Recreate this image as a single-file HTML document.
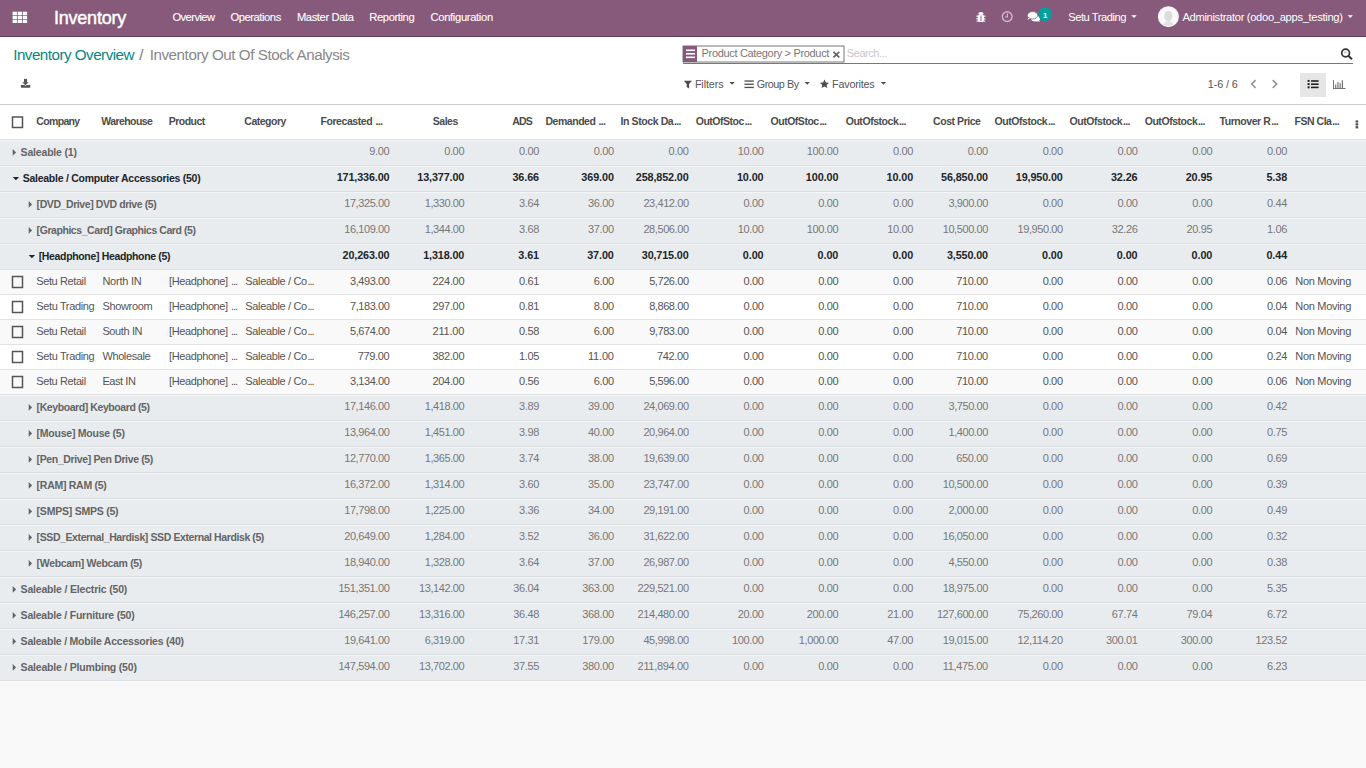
<!DOCTYPE html>
<html><head><meta charset="utf-8"><title>Inventory Out Of Stock Analysis</title>
<style>
html,body{margin:0;padding:0;width:1366px;height:768px;overflow:hidden;background:#f9f9f9}
svg{position:absolute;left:0;top:0;display:block}
text{font-family:"Liberation Sans",sans-serif;white-space:pre}
</style></head><body>
<svg width="1366" height="768" viewBox="0 0 1366 768">
<rect x="0" y="0" width="1366" height="36" fill="#875a7b" />
<rect x="0" y="36" width="1366" height="1" fill="#5f3f57" />
<rect x="12.6" y="11.7" width="4.3" height="3.3" fill="#ffffff" />
<rect x="12.6" y="15.7" width="4.3" height="3.3" fill="#ffffff" />
<rect x="12.6" y="19.7" width="4.3" height="3.3" fill="#ffffff" />
<rect x="17.7" y="11.7" width="4.3" height="3.3" fill="#ffffff" />
<rect x="17.7" y="15.7" width="4.3" height="3.3" fill="#ffffff" />
<rect x="17.7" y="19.7" width="4.3" height="3.3" fill="#ffffff" />
<rect x="22.799999999999997" y="11.7" width="4.3" height="3.3" fill="#ffffff" />
<rect x="22.799999999999997" y="15.7" width="4.3" height="3.3" fill="#ffffff" />
<rect x="22.799999999999997" y="19.7" width="4.3" height="3.3" fill="#ffffff" />
<rect x="0" y="37" width="1366" height="67" fill="#ffffff" />
<rect x="0" y="104" width="1366" height="1" fill="#cdcdcd" />
<rect x="683" y="46" width="161" height="16" fill="#ffffff" stroke="#777" stroke-width="1"/>
<rect x="683" y="46" width="14" height="16" fill="#875a7b" />
<rect x="686" y="49.5" width="9" height="1.6" fill="#ffffff" />
<rect x="686" y="53.0" width="9" height="1.6" fill="#ffffff" />
<rect x="686" y="56.5" width="9" height="1.6" fill="#ffffff" />
<rect x="683" y="63" width="670" height="1" fill="#777777" />
<rect x="1300" y="73" width="26" height="24" fill="#e6e6e6" />
<rect x="0" y="105" width="1366" height="34" fill="#ffffff" />
<rect x="0" y="139" width="1366" height="1" fill="#dfe0e3" />
<rect x="0" y="140" width="1366" height="25" fill="#e9ecef" />
<rect x="0" y="140" width="1366" height="1" fill="#f4f5f7" />
<rect x="0" y="165" width="1366" height="1" fill="#dcdfe2" />
<rect x="0" y="166" width="1366" height="25" fill="#e9ecef" />
<rect x="0" y="166" width="1366" height="1" fill="#f4f5f7" />
<rect x="0" y="191" width="1366" height="1" fill="#dcdfe2" />
<rect x="0" y="192" width="1366" height="25" fill="#e9ecef" />
<rect x="0" y="192" width="1366" height="1" fill="#f4f5f7" />
<rect x="0" y="217" width="1366" height="1" fill="#dcdfe2" />
<rect x="0" y="218" width="1366" height="25" fill="#e9ecef" />
<rect x="0" y="218" width="1366" height="1" fill="#f4f5f7" />
<rect x="0" y="243" width="1366" height="1" fill="#dcdfe2" />
<rect x="0" y="244" width="1366" height="25" fill="#e9ecef" />
<rect x="0" y="244" width="1366" height="1" fill="#f4f5f7" />
<rect x="0" y="269" width="1366" height="1" fill="#dcdfe2" />
<rect x="0" y="270" width="1366" height="24" fill="#f9f9f9" />
<rect x="0" y="294" width="1366" height="1" fill="#e2e2e2" />
<rect x="12.5" y="276.5" width="10" height="11" fill="none" stroke="#555" stroke-width="1.5"/>
<rect x="0" y="295" width="1366" height="24" fill="#ffffff" />
<rect x="0" y="319" width="1366" height="1" fill="#e2e2e2" />
<rect x="12.5" y="301.5" width="10" height="11" fill="none" stroke="#555" stroke-width="1.5"/>
<rect x="0" y="320" width="1366" height="24" fill="#f9f9f9" />
<rect x="0" y="344" width="1366" height="1" fill="#e2e2e2" />
<rect x="12.5" y="326.5" width="10" height="11" fill="none" stroke="#555" stroke-width="1.5"/>
<rect x="0" y="345" width="1366" height="24" fill="#ffffff" />
<rect x="0" y="369" width="1366" height="1" fill="#e2e2e2" />
<rect x="12.5" y="351.5" width="10" height="11" fill="none" stroke="#555" stroke-width="1.5"/>
<rect x="0" y="370" width="1366" height="24" fill="#f9f9f9" />
<rect x="0" y="394" width="1366" height="1" fill="#e2e2e2" />
<rect x="12.5" y="376.5" width="10" height="11" fill="none" stroke="#555" stroke-width="1.5"/>
<rect x="0" y="395" width="1366" height="25" fill="#e9ecef" />
<rect x="0" y="395" width="1366" height="1" fill="#f4f5f7" />
<rect x="0" y="420" width="1366" height="1" fill="#dcdfe2" />
<rect x="0" y="421" width="1366" height="25" fill="#e9ecef" />
<rect x="0" y="421" width="1366" height="1" fill="#f4f5f7" />
<rect x="0" y="446" width="1366" height="1" fill="#dcdfe2" />
<rect x="0" y="447" width="1366" height="25" fill="#e9ecef" />
<rect x="0" y="447" width="1366" height="1" fill="#f4f5f7" />
<rect x="0" y="472" width="1366" height="1" fill="#dcdfe2" />
<rect x="0" y="473" width="1366" height="25" fill="#e9ecef" />
<rect x="0" y="473" width="1366" height="1" fill="#f4f5f7" />
<rect x="0" y="498" width="1366" height="1" fill="#dcdfe2" />
<rect x="0" y="499" width="1366" height="25" fill="#e9ecef" />
<rect x="0" y="499" width="1366" height="1" fill="#f4f5f7" />
<rect x="0" y="524" width="1366" height="1" fill="#dcdfe2" />
<rect x="0" y="525" width="1366" height="25" fill="#e9ecef" />
<rect x="0" y="525" width="1366" height="1" fill="#f4f5f7" />
<rect x="0" y="550" width="1366" height="1" fill="#dcdfe2" />
<rect x="0" y="551" width="1366" height="25" fill="#e9ecef" />
<rect x="0" y="551" width="1366" height="1" fill="#f4f5f7" />
<rect x="0" y="576" width="1366" height="1" fill="#dcdfe2" />
<rect x="0" y="577" width="1366" height="25" fill="#e9ecef" />
<rect x="0" y="577" width="1366" height="1" fill="#f4f5f7" />
<rect x="0" y="602" width="1366" height="1" fill="#dcdfe2" />
<rect x="0" y="603" width="1366" height="25" fill="#e9ecef" />
<rect x="0" y="603" width="1366" height="1" fill="#f4f5f7" />
<rect x="0" y="628" width="1366" height="1" fill="#dcdfe2" />
<rect x="0" y="629" width="1366" height="25" fill="#e9ecef" />
<rect x="0" y="629" width="1366" height="1" fill="#f4f5f7" />
<rect x="0" y="654" width="1366" height="1" fill="#dcdfe2" />
<rect x="0" y="655" width="1366" height="25" fill="#e9ecef" />
<rect x="0" y="655" width="1366" height="1" fill="#f4f5f7" />
<rect x="0" y="680" width="1366" height="1" fill="#dcdfe2" />
<rect x="0" y="681" width="1366" height="87" fill="#f9f9f9" />
<rect x="0" y="685" width="1366" height="1" fill="#f4f4f4" />
<rect x="12.5" y="117" width="10" height="10.5" fill="none" stroke="#555" stroke-width="1.5"/>
<g fill="#ffffff"><ellipse cx="980.9" cy="13.4" rx="2.6" ry="1.5"/><rect x="977.8" y="14.6" width="6.2" height="7.2" rx="2.2"/><rect x="976.3" y="15.6" width="9.2" height="1.1"/><rect x="976.3" y="18.3" width="9.2" height="1.1"/><rect x="976.6" y="20.6" width="8.6" height="1.1"/></g><rect x="980.5" y="15.5" width="0.9" height="5.5" fill="#875a7b"/>
<circle cx="1007.2" cy="16.6" r="4.9" fill="none" stroke="#d3b6cb" stroke-width="1.4"/><path d="M1007.4 13.6 v3.3 h-2.2" fill="none" stroke="#d3b6cb" stroke-width="1.2"/>
<g fill="#ffffff"><ellipse cx="1032.6" cy="15.3" rx="5.2" ry="3.7"/><path d="M1028.4 17.2 l-1 2.6 l3.6 -1.4 z"/><ellipse cx="1035.6" cy="18.4" rx="4.6" ry="3.0"/><path d="M1038.4 19.6 l1.6 2.2 l-3.8 -0.9 z"/></g><ellipse cx="1032.6" cy="15.3" rx="5.2" ry="3.7" fill="none" stroke="#875a7b" stroke-width="0.8"/>
<circle cx="1045.1" cy="14.1" r="6.9" fill="#00a09d"/>
<path d="M1131.3 15.2 h5.4 l-2.7 2.8 z" fill="#ffffff"/>
<path d="M1347.7 15.2 h5.2 l-2.6 2.7 z" fill="#ffffff"/>
<circle cx="1168.4" cy="16.7" r="10.5" fill="#f9f9f9"/><ellipse cx="1168.3" cy="16" rx="4" ry="5.2" fill="#dcdcdc"/><path d="M1163.2 24.8 q1 -3.4 5.2 -3.6 q4.2 0.2 5.2 3.6 q-2.4 1 -5.2 1 q-2.8 0 -5.2 -1z" fill="#e2e2e2"/>
<g fill="#555555"><rect x="24" y="78.9" width="3" height="3.8"/><path d="M22.1 82.2 h6.7 l-3.35 3.1 z"/><path d="M20.9 85.1 h3.6 l1 1 l1 -1 h3.7 v2.7 h-9.3 z"/></g>
<path d="M683.8 80.7 h8.2 l-2.9 3.4 v4.5 l-2.4 -1.6 v-2.9 z" fill="#4c4c4c"/>
<path d="M729.4 82 h5.4 l-2.7 2.8 z" fill="#4c4c4c"/>
<g fill="#4c4c4c"><rect x="744.5" y="80.4" width="9.3" height="1.3"/><rect x="744.5" y="83.6" width="9.3" height="1.3"/><rect x="744.5" y="86.8" width="9.3" height="1.3"/></g>
<path d="M804.6 82 h5.2 l-2.6 2.8 z" fill="#4c4c4c"/>
<path d="M824.45 79.6 l1.35 2.9 l3.2 0.35 l-2.4 2.15 l0.7 3.1 l-2.85 -1.65 l-2.85 1.65 l0.7 -3.1 l-2.4 -2.15 l3.2 -0.35 z" fill="#4c4c4c"/>
<path d="M880.9 82 h5.2 l-2.6 2.8 z" fill="#4c4c4c"/>
<path d="M833.4 51.8 l5.9 5.6 M839.3 51.8 l-5.9 5.6" stroke="#666" stroke-width="1.7"/>
<circle cx="1345.6" cy="53" r="3.9" fill="none" stroke="#333" stroke-width="1.7"/><path d="M1348.3 55.8 l3.7 3.5" stroke="#333" stroke-width="2"/><path d="M1343.8 52.2 h3" stroke="#999" stroke-width="0.8"/>
<path d="M1255.6 80.2 l-4 3.85 l4 3.85" fill="none" stroke="#999" stroke-width="1.7"/>
<path d="M1272.7 80.2 l4 3.85 l-4 3.85" fill="none" stroke="#999" stroke-width="1.7"/>
<g fill="#222"><rect x="1307.6" y="79.9" width="2" height="2"/><rect x="1307.6" y="83.1" width="2" height="2"/><rect x="1307.6" y="86.3" width="2" height="2"/><rect x="1311" y="80.2" width="7.6" height="1.6"/><rect x="1311" y="83.4" width="7.6" height="1.6"/><rect x="1311" y="86.6" width="7.6" height="1.6"/></g>
<g fill="#666"><rect x="1333" y="80" width="0.9" height="8.8"/><rect x="1333" y="88" width="12.5" height="0.9"/><rect x="1335.2" y="84.5" width="1.1" height="3.5"/><rect x="1337.4" y="82" width="1.1" height="6"/><rect x="1339.6" y="83.3" width="1.1" height="4.7"/><rect x="1341.8" y="80.3" width="1.1" height="7.7"/></g>
<g fill="#4c4c4c"><rect x="1355.6" y="120.4" width="2.6" height="2.2"/><rect x="1355.6" y="123.3" width="2.6" height="2.2"/><rect x="1355.6" y="126.2" width="2.6" height="2.2"/></g>
<path d="M12.7 149.0 v6.8 l3.4 -3.4 z" fill="#646464"/>
<path d="M12.7 177 h6.4 l-3.2 3.2 z" fill="#212529"/>
<path d="M28.7 201.0 v6.8 l3.4 -3.4 z" fill="#646464"/>
<path d="M28.7 227.0 v6.8 l3.4 -3.4 z" fill="#646464"/>
<path d="M28.7 255 h6.4 l-3.2 3.2 z" fill="#212529"/>
<path d="M28.7 404.0 v6.8 l3.4 -3.4 z" fill="#646464"/>
<path d="M28.7 430.0 v6.8 l3.4 -3.4 z" fill="#646464"/>
<path d="M28.7 456.0 v6.8 l3.4 -3.4 z" fill="#646464"/>
<path d="M28.7 482.0 v6.8 l3.4 -3.4 z" fill="#646464"/>
<path d="M28.7 508.0 v6.8 l3.4 -3.4 z" fill="#646464"/>
<path d="M28.7 534.0 v6.8 l3.4 -3.4 z" fill="#646464"/>
<path d="M28.7 560.0 v6.8 l3.4 -3.4 z" fill="#646464"/>
<path d="M12.7 586.0 v6.8 l3.4 -3.4 z" fill="#646464"/>
<path d="M12.7 612.0 v6.8 l3.4 -3.4 z" fill="#646464"/>
<path d="M12.7 638.0 v6.8 l3.4 -3.4 z" fill="#646464"/>
<path d="M12.7 664.0 v6.8 l3.4 -3.4 z" fill="#646464"/>
<text x="54.0" y="24.0" font-size="18" font-weight="400" fill="#ffffff" letter-spacing="-0.225" stroke="#ffffff" stroke-width="0.45">Inventory</text>
<text x="172.4" y="21.1" font-size="11.2" font-weight="400" fill="#ffffff" letter-spacing="-0.564" stroke="#ffffff" stroke-width="0.1">Overview</text>
<text x="230.4" y="21.1" font-size="11.2" font-weight="400" fill="#ffffff" letter-spacing="-0.431" stroke="#ffffff" stroke-width="0.1">Operations</text>
<text x="296.9" y="21.1" font-size="11.2" font-weight="400" fill="#ffffff" letter-spacing="-0.392" stroke="#ffffff" stroke-width="0.1">Master Data</text>
<text x="369.3" y="21.1" font-size="11.2" font-weight="400" fill="#ffffff" letter-spacing="-0.396" stroke="#ffffff" stroke-width="0.1">Reporting</text>
<text x="430.5" y="21.1" font-size="11.2" font-weight="400" fill="#ffffff" letter-spacing="-0.326" stroke="#ffffff" stroke-width="0.1">Configuration</text>
<text x="1068.2" y="21.4" font-size="11.2" font-weight="400" fill="#ffffff" letter-spacing="-0.459">Setu Trading</text>
<text x="1182.4" y="21.3" font-size="11.2" font-weight="400" fill="#ffffff" letter-spacing="-0.327">Administrator (odoo_apps_testing)</text>
<text x="13.2" y="60.2" font-size="15.2" font-weight="400" fill="#06877f" letter-spacing="-0.510">Inventory Overview</text>
<text x="139.2" y="60.2" font-size="15.2" font-weight="400" fill="#777777" letter-spacing="1.718">/</text>
<text x="149.7" y="60.2" font-size="15.2" font-weight="400" fill="#888888" letter-spacing="-0.445">Inventory Out Of Stock Analysis</text>
<text x="701.6" y="56.9" font-size="11" font-weight="400" fill="#777777" letter-spacing="-0.331">Product Category &gt; Product</text>
<text x="846.8" y="57.0" font-size="11" font-weight="400" fill="#c8c8c8" letter-spacing="-0.432">Search...</text>
<text x="694.9" y="88.0" font-size="10.8" font-weight="400" fill="#555555" letter-spacing="-0.114">Filters</text>
<text x="756.7" y="88.0" font-size="10.8" font-weight="400" fill="#555555" letter-spacing="-0.457">Group By</text>
<text x="832.1" y="88.0" font-size="10.8" font-weight="400" fill="#555555" letter-spacing="-0.228">Favorites</text>
<text x="1207.8" y="87.9" font-size="10.8" font-weight="400" fill="#555555" letter-spacing="-0.111">1-6 / 6</text>
<text x="1045.3" y="17.6" font-size="8" font-weight="700" fill="#ffffff" letter-spacing="0.141" text-anchor="middle">1</text>
<text x="36.3" y="125.1" font-size="10.5" font-weight="700" fill="#4c4c4c" letter-spacing="-0.657">Company</text>
<text x="101.2" y="125.1" font-size="10.5" font-weight="700" fill="#4c4c4c" letter-spacing="-0.555">Warehouse</text>
<text x="168.7" y="125.1" font-size="10.5" font-weight="700" fill="#4c4c4c" letter-spacing="-0.513">Product</text>
<text x="244.3" y="125.1" font-size="10.5" font-weight="700" fill="#4c4c4c" letter-spacing="-0.493">Category</text>
<text x="320.4" y="125.1" font-size="10.5" font-weight="700" fill="#4c4c4c" letter-spacing="-0.415">Forecasted </text>
<text x="375.5" y="125.1" font-size="10.5" font-weight="700" fill="#4c4c4c" letter-spacing="-0.666">...</text>
<text x="545.5" y="125.1" font-size="10.5" font-weight="700" fill="#4c4c4c" letter-spacing="-0.468">Demanded </text>
<text x="598.6" y="125.1" font-size="10.5" font-weight="700" fill="#4c4c4c" letter-spacing="-0.666">...</text>
<text x="620.6" y="125.1" font-size="10.5" font-weight="700" fill="#4c4c4c" letter-spacing="-0.409">In Stock Da</text>
<text x="674.0" y="125.1" font-size="10.5" font-weight="700" fill="#4c4c4c" letter-spacing="-0.666">...</text>
<text x="695.7" y="125.1" font-size="10.5" font-weight="700" fill="#4c4c4c" letter-spacing="-0.478">OutOfStoc</text>
<text x="744.7" y="125.1" font-size="10.5" font-weight="700" fill="#4c4c4c" letter-spacing="-0.666">...</text>
<text x="770.5" y="125.1" font-size="10.5" font-weight="700" fill="#4c4c4c" letter-spacing="-0.478">OutOfStoc</text>
<text x="819.5" y="125.1" font-size="10.5" font-weight="700" fill="#4c4c4c" letter-spacing="-0.666">...</text>
<text x="845.7" y="125.1" font-size="10.5" font-weight="700" fill="#4c4c4c" letter-spacing="-0.451">OutOfstock</text>
<text x="899.1" y="125.1" font-size="10.5" font-weight="700" fill="#4c4c4c" letter-spacing="-0.666">...</text>
<text x="994.6" y="125.1" font-size="10.5" font-weight="700" fill="#4c4c4c" letter-spacing="-0.451">OutOfstock</text>
<text x="1048.0" y="125.1" font-size="10.5" font-weight="700" fill="#4c4c4c" letter-spacing="-0.666">...</text>
<text x="1069.6" y="125.1" font-size="10.5" font-weight="700" fill="#4c4c4c" letter-spacing="-0.451">OutOfstock</text>
<text x="1123.0" y="125.1" font-size="10.5" font-weight="700" fill="#4c4c4c" letter-spacing="-0.666">...</text>
<text x="1144.7" y="125.1" font-size="10.5" font-weight="700" fill="#4c4c4c" letter-spacing="-0.451">OutOfstock</text>
<text x="1198.1" y="125.1" font-size="10.5" font-weight="700" fill="#4c4c4c" letter-spacing="-0.666">...</text>
<text x="1219.5" y="125.1" font-size="10.5" font-weight="700" fill="#4c4c4c" letter-spacing="-0.434">Turnover R</text>
<text x="1271.2" y="125.1" font-size="10.5" font-weight="700" fill="#4c4c4c" letter-spacing="-0.666">...</text>
<text x="1294.5" y="125.1" font-size="10.5" font-weight="700" fill="#4c4c4c" letter-spacing="-0.474">FSN Cla</text>
<text x="1332.2" y="125.1" font-size="10.5" font-weight="700" fill="#4c4c4c" letter-spacing="-0.666">...</text>
<text x="457.9" y="125.1" font-size="10.5" font-weight="700" fill="#4c4c4c" letter-spacing="-0.459" text-anchor="end">Sales</text>
<text x="532.0" y="125.1" font-size="10.5" font-weight="700" fill="#4c4c4c" letter-spacing="-0.813" text-anchor="end">ADS</text>
<text x="980.5" y="125.1" font-size="10.5" font-weight="700" fill="#4c4c4c" letter-spacing="-0.453" text-anchor="end">Cost Price</text>
<text x="20.6" y="156.2" font-size="10.5" font-weight="700" fill="#646464" letter-spacing="-0.181">Saleable (1)</text>
<text x="389.4" y="155.3" font-size="11" font-weight="400" fill="#777777" letter-spacing="-0.338" text-anchor="end">9.00</text>
<text x="464.2" y="155.3" font-size="11" font-weight="400" fill="#777777" letter-spacing="-0.338" text-anchor="end">0.00</text>
<text x="539.0" y="155.3" font-size="11" font-weight="400" fill="#777777" letter-spacing="-0.338" text-anchor="end">0.00</text>
<text x="613.8" y="155.3" font-size="11" font-weight="400" fill="#777777" letter-spacing="-0.338" text-anchor="end">0.00</text>
<text x="688.6" y="155.3" font-size="11" font-weight="400" fill="#777777" letter-spacing="-0.338" text-anchor="end">0.00</text>
<text x="763.5" y="155.3" font-size="11" font-weight="400" fill="#777777" letter-spacing="-0.338" text-anchor="end">10.00</text>
<text x="838.3" y="155.3" font-size="11" font-weight="400" fill="#777777" letter-spacing="-0.338" text-anchor="end">100.00</text>
<text x="913.1" y="155.3" font-size="11" font-weight="400" fill="#777777" letter-spacing="-0.338" text-anchor="end">0.00</text>
<text x="987.9" y="155.3" font-size="11" font-weight="400" fill="#777777" letter-spacing="-0.338" text-anchor="end">0.00</text>
<text x="1062.7" y="155.3" font-size="11" font-weight="400" fill="#777777" letter-spacing="-0.338" text-anchor="end">0.00</text>
<text x="1137.5" y="155.3" font-size="11" font-weight="400" fill="#777777" letter-spacing="-0.338" text-anchor="end">0.00</text>
<text x="1212.3" y="155.3" font-size="11" font-weight="400" fill="#777777" letter-spacing="-0.338" text-anchor="end">0.00</text>
<text x="1287.1" y="155.3" font-size="11" font-weight="400" fill="#777777" letter-spacing="-0.338" text-anchor="end">0.00</text>
<text x="22.7" y="182.2" font-size="10.5" font-weight="700" fill="#212529" letter-spacing="-0.257">Saleable / Computer Accessories (50)</text>
<text x="389.4" y="181.3" font-size="10.8" font-weight="700" fill="#212529" letter-spacing="-0.131" text-anchor="end">171,336.00</text>
<text x="464.2" y="181.3" font-size="10.8" font-weight="700" fill="#212529" letter-spacing="-0.134" text-anchor="end">13,377.00</text>
<text x="539.0" y="181.3" font-size="10.8" font-weight="700" fill="#212529" letter-spacing="-0.086" text-anchor="end">36.66</text>
<text x="613.8" y="181.3" font-size="10.8" font-weight="700" fill="#212529" letter-spacing="-0.088" text-anchor="end">369.00</text>
<text x="688.6" y="181.3" font-size="10.8" font-weight="700" fill="#212529" letter-spacing="-0.131" text-anchor="end">258,852.00</text>
<text x="763.5" y="181.3" font-size="10.8" font-weight="700" fill="#212529" letter-spacing="-0.086" text-anchor="end">10.00</text>
<text x="838.3" y="181.3" font-size="10.8" font-weight="700" fill="#212529" letter-spacing="-0.088" text-anchor="end">100.00</text>
<text x="913.1" y="181.3" font-size="10.8" font-weight="700" fill="#212529" letter-spacing="-0.086" text-anchor="end">10.00</text>
<text x="987.9" y="181.3" font-size="10.8" font-weight="700" fill="#212529" letter-spacing="-0.134" text-anchor="end">56,850.00</text>
<text x="1062.7" y="181.3" font-size="10.8" font-weight="700" fill="#212529" letter-spacing="-0.134" text-anchor="end">19,950.00</text>
<text x="1137.5" y="181.3" font-size="10.8" font-weight="700" fill="#212529" letter-spacing="-0.086" text-anchor="end">32.26</text>
<text x="1212.3" y="181.3" font-size="10.8" font-weight="700" fill="#212529" letter-spacing="-0.086" text-anchor="end">20.95</text>
<text x="1287.1" y="181.3" font-size="10.8" font-weight="700" fill="#212529" letter-spacing="-0.081" text-anchor="end">5.38</text>
<text x="36.6" y="208.2" font-size="10.5" font-weight="700" fill="#646464" letter-spacing="-0.419">[DVD_Drive] DVD drive (5)</text>
<text x="389.4" y="207.3" font-size="11" font-weight="400" fill="#777777" letter-spacing="-0.415" text-anchor="end">17,325.00</text>
<text x="464.2" y="207.3" font-size="11" font-weight="400" fill="#777777" letter-spacing="-0.424" text-anchor="end">1,330.00</text>
<text x="539.0" y="207.3" font-size="11" font-weight="400" fill="#777777" letter-spacing="-0.338" text-anchor="end">3.64</text>
<text x="613.8" y="207.3" font-size="11" font-weight="400" fill="#777777" letter-spacing="-0.338" text-anchor="end">36.00</text>
<text x="688.6" y="207.3" font-size="11" font-weight="400" fill="#777777" letter-spacing="-0.415" text-anchor="end">23,412.00</text>
<text x="763.5" y="207.3" font-size="11" font-weight="400" fill="#777777" letter-spacing="-0.338" text-anchor="end">0.00</text>
<text x="838.3" y="207.3" font-size="11" font-weight="400" fill="#777777" letter-spacing="-0.338" text-anchor="end">0.00</text>
<text x="913.1" y="207.3" font-size="11" font-weight="400" fill="#777777" letter-spacing="-0.338" text-anchor="end">0.00</text>
<text x="987.9" y="207.3" font-size="11" font-weight="400" fill="#777777" letter-spacing="-0.424" text-anchor="end">3,900.00</text>
<text x="1062.7" y="207.3" font-size="11" font-weight="400" fill="#777777" letter-spacing="-0.338" text-anchor="end">0.00</text>
<text x="1137.5" y="207.3" font-size="11" font-weight="400" fill="#777777" letter-spacing="-0.338" text-anchor="end">0.00</text>
<text x="1212.3" y="207.3" font-size="11" font-weight="400" fill="#777777" letter-spacing="-0.338" text-anchor="end">0.00</text>
<text x="1287.1" y="207.3" font-size="11" font-weight="400" fill="#777777" letter-spacing="-0.338" text-anchor="end">0.44</text>
<text x="36.6" y="234.2" font-size="10.5" font-weight="700" fill="#646464" letter-spacing="-0.437">[Graphics_Card] Graphics Card (5)</text>
<text x="389.4" y="233.3" font-size="11" font-weight="400" fill="#777777" letter-spacing="-0.415" text-anchor="end">16,109.00</text>
<text x="464.2" y="233.3" font-size="11" font-weight="400" fill="#777777" letter-spacing="-0.424" text-anchor="end">1,344.00</text>
<text x="539.0" y="233.3" font-size="11" font-weight="400" fill="#777777" letter-spacing="-0.338" text-anchor="end">3.68</text>
<text x="613.8" y="233.3" font-size="11" font-weight="400" fill="#777777" letter-spacing="-0.338" text-anchor="end">37.00</text>
<text x="688.6" y="233.3" font-size="11" font-weight="400" fill="#777777" letter-spacing="-0.415" text-anchor="end">28,506.00</text>
<text x="763.5" y="233.3" font-size="11" font-weight="400" fill="#777777" letter-spacing="-0.338" text-anchor="end">10.00</text>
<text x="838.3" y="233.3" font-size="11" font-weight="400" fill="#777777" letter-spacing="-0.338" text-anchor="end">100.00</text>
<text x="913.1" y="233.3" font-size="11" font-weight="400" fill="#777777" letter-spacing="-0.338" text-anchor="end">10.00</text>
<text x="987.9" y="233.3" font-size="11" font-weight="400" fill="#777777" letter-spacing="-0.415" text-anchor="end">10,500.00</text>
<text x="1062.7" y="233.3" font-size="11" font-weight="400" fill="#777777" letter-spacing="-0.415" text-anchor="end">19,950.00</text>
<text x="1137.5" y="233.3" font-size="11" font-weight="400" fill="#777777" letter-spacing="-0.338" text-anchor="end">32.26</text>
<text x="1212.3" y="233.3" font-size="11" font-weight="400" fill="#777777" letter-spacing="-0.338" text-anchor="end">20.95</text>
<text x="1287.1" y="233.3" font-size="11" font-weight="400" fill="#777777" letter-spacing="-0.338" text-anchor="end">1.06</text>
<text x="38.7" y="260.2" font-size="10.5" font-weight="700" fill="#212529" letter-spacing="-0.342">[Headphone] Headphone (5)</text>
<text x="389.4" y="259.3" font-size="10.8" font-weight="700" fill="#212529" letter-spacing="-0.134" text-anchor="end">20,263.00</text>
<text x="464.2" y="259.3" font-size="10.8" font-weight="700" fill="#212529" letter-spacing="-0.138" text-anchor="end">1,318.00</text>
<text x="539.0" y="259.3" font-size="10.8" font-weight="700" fill="#212529" letter-spacing="-0.081" text-anchor="end">3.61</text>
<text x="613.8" y="259.3" font-size="10.8" font-weight="700" fill="#212529" letter-spacing="-0.086" text-anchor="end">37.00</text>
<text x="688.6" y="259.3" font-size="10.8" font-weight="700" fill="#212529" letter-spacing="-0.134" text-anchor="end">30,715.00</text>
<text x="763.5" y="259.3" font-size="10.8" font-weight="700" fill="#212529" letter-spacing="-0.081" text-anchor="end">0.00</text>
<text x="838.3" y="259.3" font-size="10.8" font-weight="700" fill="#212529" letter-spacing="-0.081" text-anchor="end">0.00</text>
<text x="913.1" y="259.3" font-size="10.8" font-weight="700" fill="#212529" letter-spacing="-0.081" text-anchor="end">0.00</text>
<text x="987.9" y="259.3" font-size="10.8" font-weight="700" fill="#212529" letter-spacing="-0.138" text-anchor="end">3,550.00</text>
<text x="1062.7" y="259.3" font-size="10.8" font-weight="700" fill="#212529" letter-spacing="-0.081" text-anchor="end">0.00</text>
<text x="1137.5" y="259.3" font-size="10.8" font-weight="700" fill="#212529" letter-spacing="-0.081" text-anchor="end">0.00</text>
<text x="1212.3" y="259.3" font-size="10.8" font-weight="700" fill="#212529" letter-spacing="-0.081" text-anchor="end">0.00</text>
<text x="1287.1" y="259.3" font-size="10.8" font-weight="700" fill="#212529" letter-spacing="-0.081" text-anchor="end">0.44</text>
<text x="36.3" y="285.3" font-size="11" font-weight="400" fill="#555555" letter-spacing="-0.401">Setu Retail</text>
<text x="102.4" y="285.3" font-size="11" font-weight="400" fill="#555555" letter-spacing="-0.238">North IN</text>
<text x="169.1" y="285.3" font-size="11" font-weight="400" fill="#555555" letter-spacing="-0.400">[Headphone] </text>
<text x="231.0" y="285.3" font-size="11" font-weight="400" fill="#555555" letter-spacing="-1.115">...</text>
<text x="245.3" y="285.3" font-size="11" font-weight="400" fill="#555555" letter-spacing="-0.349">Saleable / Co</text>
<text x="307.5" y="285.3" font-size="11" font-weight="400" fill="#555555" letter-spacing="-1.115">...</text>
<text x="389.4" y="285.3" font-size="11" font-weight="400" fill="#555555" letter-spacing="-0.424" text-anchor="end">3,493.00</text>
<text x="464.2" y="285.3" font-size="11" font-weight="400" fill="#555555" letter-spacing="-0.338" text-anchor="end">224.00</text>
<text x="539.0" y="285.3" font-size="11" font-weight="400" fill="#555555" letter-spacing="-0.338" text-anchor="end">0.61</text>
<text x="613.8" y="285.3" font-size="11" font-weight="400" fill="#555555" letter-spacing="-0.338" text-anchor="end">6.00</text>
<text x="688.6" y="285.3" font-size="11" font-weight="400" fill="#555555" letter-spacing="-0.424" text-anchor="end">5,726.00</text>
<text x="763.5" y="285.3" font-size="11" font-weight="400" fill="#555555" letter-spacing="-0.338" text-anchor="end">0.00</text>
<text x="838.3" y="285.3" font-size="11" font-weight="400" fill="#555555" letter-spacing="-0.338" text-anchor="end">0.00</text>
<text x="913.1" y="285.3" font-size="11" font-weight="400" fill="#555555" letter-spacing="-0.338" text-anchor="end">0.00</text>
<text x="987.9" y="285.3" font-size="11" font-weight="400" fill="#555555" letter-spacing="-0.338" text-anchor="end">710.00</text>
<text x="1062.7" y="285.3" font-size="11" font-weight="400" fill="#555555" letter-spacing="-0.338" text-anchor="end">0.00</text>
<text x="1137.5" y="285.3" font-size="11" font-weight="400" fill="#555555" letter-spacing="-0.338" text-anchor="end">0.00</text>
<text x="1212.3" y="285.3" font-size="11" font-weight="400" fill="#555555" letter-spacing="-0.338" text-anchor="end">0.00</text>
<text x="1287.1" y="285.3" font-size="11" font-weight="400" fill="#555555" letter-spacing="-0.338" text-anchor="end">0.06</text>
<text x="1295.3" y="285.3" font-size="11" font-weight="400" fill="#555555" letter-spacing="-0.299">Non Moving</text>
<text x="36.3" y="310.3" font-size="11" font-weight="400" fill="#555555" letter-spacing="-0.370">Setu Trading</text>
<text x="102.4" y="310.3" font-size="11" font-weight="400" fill="#555555" letter-spacing="-0.321">Showroom</text>
<text x="169.1" y="310.3" font-size="11" font-weight="400" fill="#555555" letter-spacing="-0.400">[Headphone] </text>
<text x="231.0" y="310.3" font-size="11" font-weight="400" fill="#555555" letter-spacing="-1.115">...</text>
<text x="245.3" y="310.3" font-size="11" font-weight="400" fill="#555555" letter-spacing="-0.349">Saleable / Co</text>
<text x="307.5" y="310.3" font-size="11" font-weight="400" fill="#555555" letter-spacing="-1.115">...</text>
<text x="389.4" y="310.3" font-size="11" font-weight="400" fill="#555555" letter-spacing="-0.424" text-anchor="end">7,183.00</text>
<text x="464.2" y="310.3" font-size="11" font-weight="400" fill="#555555" letter-spacing="-0.338" text-anchor="end">297.00</text>
<text x="539.0" y="310.3" font-size="11" font-weight="400" fill="#555555" letter-spacing="-0.338" text-anchor="end">0.81</text>
<text x="613.8" y="310.3" font-size="11" font-weight="400" fill="#555555" letter-spacing="-0.338" text-anchor="end">8.00</text>
<text x="688.6" y="310.3" font-size="11" font-weight="400" fill="#555555" letter-spacing="-0.424" text-anchor="end">8,868.00</text>
<text x="763.5" y="310.3" font-size="11" font-weight="400" fill="#555555" letter-spacing="-0.338" text-anchor="end">0.00</text>
<text x="838.3" y="310.3" font-size="11" font-weight="400" fill="#555555" letter-spacing="-0.338" text-anchor="end">0.00</text>
<text x="913.1" y="310.3" font-size="11" font-weight="400" fill="#555555" letter-spacing="-0.338" text-anchor="end">0.00</text>
<text x="987.9" y="310.3" font-size="11" font-weight="400" fill="#555555" letter-spacing="-0.338" text-anchor="end">710.00</text>
<text x="1062.7" y="310.3" font-size="11" font-weight="400" fill="#555555" letter-spacing="-0.338" text-anchor="end">0.00</text>
<text x="1137.5" y="310.3" font-size="11" font-weight="400" fill="#555555" letter-spacing="-0.338" text-anchor="end">0.00</text>
<text x="1212.3" y="310.3" font-size="11" font-weight="400" fill="#555555" letter-spacing="-0.338" text-anchor="end">0.00</text>
<text x="1287.1" y="310.3" font-size="11" font-weight="400" fill="#555555" letter-spacing="-0.338" text-anchor="end">0.04</text>
<text x="1295.3" y="310.3" font-size="11" font-weight="400" fill="#555555" letter-spacing="-0.299">Non Moving</text>
<text x="36.3" y="335.3" font-size="11" font-weight="400" fill="#555555" letter-spacing="-0.401">Setu Retail</text>
<text x="102.4" y="335.3" font-size="11" font-weight="400" fill="#555555" letter-spacing="-0.380">South IN</text>
<text x="169.1" y="335.3" font-size="11" font-weight="400" fill="#555555" letter-spacing="-0.400">[Headphone] </text>
<text x="231.0" y="335.3" font-size="11" font-weight="400" fill="#555555" letter-spacing="-1.115">...</text>
<text x="245.3" y="335.3" font-size="11" font-weight="400" fill="#555555" letter-spacing="-0.349">Saleable / Co</text>
<text x="307.5" y="335.3" font-size="11" font-weight="400" fill="#555555" letter-spacing="-1.115">...</text>
<text x="389.4" y="335.3" font-size="11" font-weight="400" fill="#555555" letter-spacing="-0.424" text-anchor="end">5,674.00</text>
<text x="464.2" y="335.3" font-size="11" font-weight="400" fill="#555555" letter-spacing="-0.202" text-anchor="end">211.00</text>
<text x="539.0" y="335.3" font-size="11" font-weight="400" fill="#555555" letter-spacing="-0.338" text-anchor="end">0.58</text>
<text x="613.8" y="335.3" font-size="11" font-weight="400" fill="#555555" letter-spacing="-0.338" text-anchor="end">6.00</text>
<text x="688.6" y="335.3" font-size="11" font-weight="400" fill="#555555" letter-spacing="-0.424" text-anchor="end">9,783.00</text>
<text x="763.5" y="335.3" font-size="11" font-weight="400" fill="#555555" letter-spacing="-0.338" text-anchor="end">0.00</text>
<text x="838.3" y="335.3" font-size="11" font-weight="400" fill="#555555" letter-spacing="-0.338" text-anchor="end">0.00</text>
<text x="913.1" y="335.3" font-size="11" font-weight="400" fill="#555555" letter-spacing="-0.338" text-anchor="end">0.00</text>
<text x="987.9" y="335.3" font-size="11" font-weight="400" fill="#555555" letter-spacing="-0.338" text-anchor="end">710.00</text>
<text x="1062.7" y="335.3" font-size="11" font-weight="400" fill="#555555" letter-spacing="-0.338" text-anchor="end">0.00</text>
<text x="1137.5" y="335.3" font-size="11" font-weight="400" fill="#555555" letter-spacing="-0.338" text-anchor="end">0.00</text>
<text x="1212.3" y="335.3" font-size="11" font-weight="400" fill="#555555" letter-spacing="-0.338" text-anchor="end">0.00</text>
<text x="1287.1" y="335.3" font-size="11" font-weight="400" fill="#555555" letter-spacing="-0.338" text-anchor="end">0.04</text>
<text x="1295.3" y="335.3" font-size="11" font-weight="400" fill="#555555" letter-spacing="-0.299">Non Moving</text>
<text x="36.3" y="360.3" font-size="11" font-weight="400" fill="#555555" letter-spacing="-0.370">Setu Trading</text>
<text x="102.4" y="360.3" font-size="11" font-weight="400" fill="#555555" letter-spacing="-0.378">Wholesale</text>
<text x="169.1" y="360.3" font-size="11" font-weight="400" fill="#555555" letter-spacing="-0.400">[Headphone] </text>
<text x="231.0" y="360.3" font-size="11" font-weight="400" fill="#555555" letter-spacing="-1.115">...</text>
<text x="245.3" y="360.3" font-size="11" font-weight="400" fill="#555555" letter-spacing="-0.349">Saleable / Co</text>
<text x="307.5" y="360.3" font-size="11" font-weight="400" fill="#555555" letter-spacing="-1.115">...</text>
<text x="389.4" y="360.3" font-size="11" font-weight="400" fill="#555555" letter-spacing="-0.338" text-anchor="end">779.00</text>
<text x="464.2" y="360.3" font-size="11" font-weight="400" fill="#555555" letter-spacing="-0.338" text-anchor="end">382.00</text>
<text x="539.0" y="360.3" font-size="11" font-weight="400" fill="#555555" letter-spacing="-0.338" text-anchor="end">1.05</text>
<text x="613.8" y="360.3" font-size="11" font-weight="400" fill="#555555" letter-spacing="-0.175" text-anchor="end">11.00</text>
<text x="688.6" y="360.3" font-size="11" font-weight="400" fill="#555555" letter-spacing="-0.338" text-anchor="end">742.00</text>
<text x="763.5" y="360.3" font-size="11" font-weight="400" fill="#555555" letter-spacing="-0.338" text-anchor="end">0.00</text>
<text x="838.3" y="360.3" font-size="11" font-weight="400" fill="#555555" letter-spacing="-0.338" text-anchor="end">0.00</text>
<text x="913.1" y="360.3" font-size="11" font-weight="400" fill="#555555" letter-spacing="-0.338" text-anchor="end">0.00</text>
<text x="987.9" y="360.3" font-size="11" font-weight="400" fill="#555555" letter-spacing="-0.338" text-anchor="end">710.00</text>
<text x="1062.7" y="360.3" font-size="11" font-weight="400" fill="#555555" letter-spacing="-0.338" text-anchor="end">0.00</text>
<text x="1137.5" y="360.3" font-size="11" font-weight="400" fill="#555555" letter-spacing="-0.338" text-anchor="end">0.00</text>
<text x="1212.3" y="360.3" font-size="11" font-weight="400" fill="#555555" letter-spacing="-0.338" text-anchor="end">0.00</text>
<text x="1287.1" y="360.3" font-size="11" font-weight="400" fill="#555555" letter-spacing="-0.338" text-anchor="end">0.24</text>
<text x="1295.3" y="360.3" font-size="11" font-weight="400" fill="#555555" letter-spacing="-0.299">Non Moving</text>
<text x="36.3" y="385.3" font-size="11" font-weight="400" fill="#555555" letter-spacing="-0.401">Setu Retail</text>
<text x="102.4" y="385.3" font-size="11" font-weight="400" fill="#555555" letter-spacing="-0.419">East IN</text>
<text x="169.1" y="385.3" font-size="11" font-weight="400" fill="#555555" letter-spacing="-0.400">[Headphone] </text>
<text x="231.0" y="385.3" font-size="11" font-weight="400" fill="#555555" letter-spacing="-1.115">...</text>
<text x="245.3" y="385.3" font-size="11" font-weight="400" fill="#555555" letter-spacing="-0.349">Saleable / Co</text>
<text x="307.5" y="385.3" font-size="11" font-weight="400" fill="#555555" letter-spacing="-1.115">...</text>
<text x="389.4" y="385.3" font-size="11" font-weight="400" fill="#555555" letter-spacing="-0.424" text-anchor="end">3,134.00</text>
<text x="464.2" y="385.3" font-size="11" font-weight="400" fill="#555555" letter-spacing="-0.338" text-anchor="end">204.00</text>
<text x="539.0" y="385.3" font-size="11" font-weight="400" fill="#555555" letter-spacing="-0.338" text-anchor="end">0.56</text>
<text x="613.8" y="385.3" font-size="11" font-weight="400" fill="#555555" letter-spacing="-0.338" text-anchor="end">6.00</text>
<text x="688.6" y="385.3" font-size="11" font-weight="400" fill="#555555" letter-spacing="-0.424" text-anchor="end">5,596.00</text>
<text x="763.5" y="385.3" font-size="11" font-weight="400" fill="#555555" letter-spacing="-0.338" text-anchor="end">0.00</text>
<text x="838.3" y="385.3" font-size="11" font-weight="400" fill="#555555" letter-spacing="-0.338" text-anchor="end">0.00</text>
<text x="913.1" y="385.3" font-size="11" font-weight="400" fill="#555555" letter-spacing="-0.338" text-anchor="end">0.00</text>
<text x="987.9" y="385.3" font-size="11" font-weight="400" fill="#555555" letter-spacing="-0.338" text-anchor="end">710.00</text>
<text x="1062.7" y="385.3" font-size="11" font-weight="400" fill="#555555" letter-spacing="-0.338" text-anchor="end">0.00</text>
<text x="1137.5" y="385.3" font-size="11" font-weight="400" fill="#555555" letter-spacing="-0.338" text-anchor="end">0.00</text>
<text x="1212.3" y="385.3" font-size="11" font-weight="400" fill="#555555" letter-spacing="-0.338" text-anchor="end">0.00</text>
<text x="1287.1" y="385.3" font-size="11" font-weight="400" fill="#555555" letter-spacing="-0.338" text-anchor="end">0.06</text>
<text x="1295.3" y="385.3" font-size="11" font-weight="400" fill="#555555" letter-spacing="-0.299">Non Moving</text>
<text x="36.6" y="411.2" font-size="10.5" font-weight="700" fill="#646464" letter-spacing="-0.419">[Keyboard] Keyboard (5)</text>
<text x="389.4" y="410.3" font-size="11" font-weight="400" fill="#777777" letter-spacing="-0.415" text-anchor="end">17,146.00</text>
<text x="464.2" y="410.3" font-size="11" font-weight="400" fill="#777777" letter-spacing="-0.424" text-anchor="end">1,418.00</text>
<text x="539.0" y="410.3" font-size="11" font-weight="400" fill="#777777" letter-spacing="-0.338" text-anchor="end">3.89</text>
<text x="613.8" y="410.3" font-size="11" font-weight="400" fill="#777777" letter-spacing="-0.338" text-anchor="end">39.00</text>
<text x="688.6" y="410.3" font-size="11" font-weight="400" fill="#777777" letter-spacing="-0.415" text-anchor="end">24,069.00</text>
<text x="763.5" y="410.3" font-size="11" font-weight="400" fill="#777777" letter-spacing="-0.338" text-anchor="end">0.00</text>
<text x="838.3" y="410.3" font-size="11" font-weight="400" fill="#777777" letter-spacing="-0.338" text-anchor="end">0.00</text>
<text x="913.1" y="410.3" font-size="11" font-weight="400" fill="#777777" letter-spacing="-0.338" text-anchor="end">0.00</text>
<text x="987.9" y="410.3" font-size="11" font-weight="400" fill="#777777" letter-spacing="-0.424" text-anchor="end">3,750.00</text>
<text x="1062.7" y="410.3" font-size="11" font-weight="400" fill="#777777" letter-spacing="-0.338" text-anchor="end">0.00</text>
<text x="1137.5" y="410.3" font-size="11" font-weight="400" fill="#777777" letter-spacing="-0.338" text-anchor="end">0.00</text>
<text x="1212.3" y="410.3" font-size="11" font-weight="400" fill="#777777" letter-spacing="-0.338" text-anchor="end">0.00</text>
<text x="1287.1" y="410.3" font-size="11" font-weight="400" fill="#777777" letter-spacing="-0.338" text-anchor="end">0.42</text>
<text x="36.6" y="437.2" font-size="10.5" font-weight="700" fill="#646464" letter-spacing="-0.242">[Mouse] Mouse (5)</text>
<text x="389.4" y="436.3" font-size="11" font-weight="400" fill="#777777" letter-spacing="-0.415" text-anchor="end">13,964.00</text>
<text x="464.2" y="436.3" font-size="11" font-weight="400" fill="#777777" letter-spacing="-0.424" text-anchor="end">1,451.00</text>
<text x="539.0" y="436.3" font-size="11" font-weight="400" fill="#777777" letter-spacing="-0.338" text-anchor="end">3.98</text>
<text x="613.8" y="436.3" font-size="11" font-weight="400" fill="#777777" letter-spacing="-0.338" text-anchor="end">40.00</text>
<text x="688.6" y="436.3" font-size="11" font-weight="400" fill="#777777" letter-spacing="-0.415" text-anchor="end">20,964.00</text>
<text x="763.5" y="436.3" font-size="11" font-weight="400" fill="#777777" letter-spacing="-0.338" text-anchor="end">0.00</text>
<text x="838.3" y="436.3" font-size="11" font-weight="400" fill="#777777" letter-spacing="-0.338" text-anchor="end">0.00</text>
<text x="913.1" y="436.3" font-size="11" font-weight="400" fill="#777777" letter-spacing="-0.338" text-anchor="end">0.00</text>
<text x="987.9" y="436.3" font-size="11" font-weight="400" fill="#777777" letter-spacing="-0.424" text-anchor="end">1,400.00</text>
<text x="1062.7" y="436.3" font-size="11" font-weight="400" fill="#777777" letter-spacing="-0.338" text-anchor="end">0.00</text>
<text x="1137.5" y="436.3" font-size="11" font-weight="400" fill="#777777" letter-spacing="-0.338" text-anchor="end">0.00</text>
<text x="1212.3" y="436.3" font-size="11" font-weight="400" fill="#777777" letter-spacing="-0.338" text-anchor="end">0.00</text>
<text x="1287.1" y="436.3" font-size="11" font-weight="400" fill="#777777" letter-spacing="-0.338" text-anchor="end">0.75</text>
<text x="36.6" y="463.2" font-size="10.5" font-weight="700" fill="#646464" letter-spacing="-0.366">[Pen_Drive] Pen Drive (5)</text>
<text x="389.4" y="462.3" font-size="11" font-weight="400" fill="#777777" letter-spacing="-0.415" text-anchor="end">12,770.00</text>
<text x="464.2" y="462.3" font-size="11" font-weight="400" fill="#777777" letter-spacing="-0.424" text-anchor="end">1,365.00</text>
<text x="539.0" y="462.3" font-size="11" font-weight="400" fill="#777777" letter-spacing="-0.338" text-anchor="end">3.74</text>
<text x="613.8" y="462.3" font-size="11" font-weight="400" fill="#777777" letter-spacing="-0.338" text-anchor="end">38.00</text>
<text x="688.6" y="462.3" font-size="11" font-weight="400" fill="#777777" letter-spacing="-0.415" text-anchor="end">19,639.00</text>
<text x="763.5" y="462.3" font-size="11" font-weight="400" fill="#777777" letter-spacing="-0.338" text-anchor="end">0.00</text>
<text x="838.3" y="462.3" font-size="11" font-weight="400" fill="#777777" letter-spacing="-0.338" text-anchor="end">0.00</text>
<text x="913.1" y="462.3" font-size="11" font-weight="400" fill="#777777" letter-spacing="-0.338" text-anchor="end">0.00</text>
<text x="987.9" y="462.3" font-size="11" font-weight="400" fill="#777777" letter-spacing="-0.338" text-anchor="end">650.00</text>
<text x="1062.7" y="462.3" font-size="11" font-weight="400" fill="#777777" letter-spacing="-0.338" text-anchor="end">0.00</text>
<text x="1137.5" y="462.3" font-size="11" font-weight="400" fill="#777777" letter-spacing="-0.338" text-anchor="end">0.00</text>
<text x="1212.3" y="462.3" font-size="11" font-weight="400" fill="#777777" letter-spacing="-0.338" text-anchor="end">0.00</text>
<text x="1287.1" y="462.3" font-size="11" font-weight="400" fill="#777777" letter-spacing="-0.338" text-anchor="end">0.69</text>
<text x="36.6" y="489.2" font-size="10.5" font-weight="700" fill="#646464" letter-spacing="-0.270">[RAM] RAM (5)</text>
<text x="389.4" y="488.3" font-size="11" font-weight="400" fill="#777777" letter-spacing="-0.415" text-anchor="end">16,372.00</text>
<text x="464.2" y="488.3" font-size="11" font-weight="400" fill="#777777" letter-spacing="-0.424" text-anchor="end">1,314.00</text>
<text x="539.0" y="488.3" font-size="11" font-weight="400" fill="#777777" letter-spacing="-0.338" text-anchor="end">3.60</text>
<text x="613.8" y="488.3" font-size="11" font-weight="400" fill="#777777" letter-spacing="-0.338" text-anchor="end">35.00</text>
<text x="688.6" y="488.3" font-size="11" font-weight="400" fill="#777777" letter-spacing="-0.415" text-anchor="end">23,747.00</text>
<text x="763.5" y="488.3" font-size="11" font-weight="400" fill="#777777" letter-spacing="-0.338" text-anchor="end">0.00</text>
<text x="838.3" y="488.3" font-size="11" font-weight="400" fill="#777777" letter-spacing="-0.338" text-anchor="end">0.00</text>
<text x="913.1" y="488.3" font-size="11" font-weight="400" fill="#777777" letter-spacing="-0.338" text-anchor="end">0.00</text>
<text x="987.9" y="488.3" font-size="11" font-weight="400" fill="#777777" letter-spacing="-0.415" text-anchor="end">10,500.00</text>
<text x="1062.7" y="488.3" font-size="11" font-weight="400" fill="#777777" letter-spacing="-0.338" text-anchor="end">0.00</text>
<text x="1137.5" y="488.3" font-size="11" font-weight="400" fill="#777777" letter-spacing="-0.338" text-anchor="end">0.00</text>
<text x="1212.3" y="488.3" font-size="11" font-weight="400" fill="#777777" letter-spacing="-0.338" text-anchor="end">0.00</text>
<text x="1287.1" y="488.3" font-size="11" font-weight="400" fill="#777777" letter-spacing="-0.338" text-anchor="end">0.39</text>
<text x="36.6" y="515.2" font-size="10.5" font-weight="700" fill="#646464" letter-spacing="-0.229">[SMPS] SMPS (5)</text>
<text x="389.4" y="514.3" font-size="11" font-weight="400" fill="#777777" letter-spacing="-0.415" text-anchor="end">17,798.00</text>
<text x="464.2" y="514.3" font-size="11" font-weight="400" fill="#777777" letter-spacing="-0.424" text-anchor="end">1,225.00</text>
<text x="539.0" y="514.3" font-size="11" font-weight="400" fill="#777777" letter-spacing="-0.338" text-anchor="end">3.36</text>
<text x="613.8" y="514.3" font-size="11" font-weight="400" fill="#777777" letter-spacing="-0.338" text-anchor="end">34.00</text>
<text x="688.6" y="514.3" font-size="11" font-weight="400" fill="#777777" letter-spacing="-0.415" text-anchor="end">29,191.00</text>
<text x="763.5" y="514.3" font-size="11" font-weight="400" fill="#777777" letter-spacing="-0.338" text-anchor="end">0.00</text>
<text x="838.3" y="514.3" font-size="11" font-weight="400" fill="#777777" letter-spacing="-0.338" text-anchor="end">0.00</text>
<text x="913.1" y="514.3" font-size="11" font-weight="400" fill="#777777" letter-spacing="-0.338" text-anchor="end">0.00</text>
<text x="987.9" y="514.3" font-size="11" font-weight="400" fill="#777777" letter-spacing="-0.424" text-anchor="end">2,000.00</text>
<text x="1062.7" y="514.3" font-size="11" font-weight="400" fill="#777777" letter-spacing="-0.338" text-anchor="end">0.00</text>
<text x="1137.5" y="514.3" font-size="11" font-weight="400" fill="#777777" letter-spacing="-0.338" text-anchor="end">0.00</text>
<text x="1212.3" y="514.3" font-size="11" font-weight="400" fill="#777777" letter-spacing="-0.338" text-anchor="end">0.00</text>
<text x="1287.1" y="514.3" font-size="11" font-weight="400" fill="#777777" letter-spacing="-0.338" text-anchor="end">0.49</text>
<text x="36.6" y="541.2" font-size="10.5" font-weight="700" fill="#646464" letter-spacing="-0.402">[SSD_External_Hardisk] SSD External Hardisk (5)</text>
<text x="389.4" y="540.3" font-size="11" font-weight="400" fill="#777777" letter-spacing="-0.415" text-anchor="end">20,649.00</text>
<text x="464.2" y="540.3" font-size="11" font-weight="400" fill="#777777" letter-spacing="-0.424" text-anchor="end">1,284.00</text>
<text x="539.0" y="540.3" font-size="11" font-weight="400" fill="#777777" letter-spacing="-0.338" text-anchor="end">3.52</text>
<text x="613.8" y="540.3" font-size="11" font-weight="400" fill="#777777" letter-spacing="-0.338" text-anchor="end">36.00</text>
<text x="688.6" y="540.3" font-size="11" font-weight="400" fill="#777777" letter-spacing="-0.415" text-anchor="end">31,622.00</text>
<text x="763.5" y="540.3" font-size="11" font-weight="400" fill="#777777" letter-spacing="-0.338" text-anchor="end">0.00</text>
<text x="838.3" y="540.3" font-size="11" font-weight="400" fill="#777777" letter-spacing="-0.338" text-anchor="end">0.00</text>
<text x="913.1" y="540.3" font-size="11" font-weight="400" fill="#777777" letter-spacing="-0.338" text-anchor="end">0.00</text>
<text x="987.9" y="540.3" font-size="11" font-weight="400" fill="#777777" letter-spacing="-0.415" text-anchor="end">16,050.00</text>
<text x="1062.7" y="540.3" font-size="11" font-weight="400" fill="#777777" letter-spacing="-0.338" text-anchor="end">0.00</text>
<text x="1137.5" y="540.3" font-size="11" font-weight="400" fill="#777777" letter-spacing="-0.338" text-anchor="end">0.00</text>
<text x="1212.3" y="540.3" font-size="11" font-weight="400" fill="#777777" letter-spacing="-0.338" text-anchor="end">0.00</text>
<text x="1287.1" y="540.3" font-size="11" font-weight="400" fill="#777777" letter-spacing="-0.338" text-anchor="end">0.32</text>
<text x="36.6" y="567.2" font-size="10.5" font-weight="700" fill="#646464" letter-spacing="-0.328">[Webcam] Webcam (5)</text>
<text x="389.4" y="566.3" font-size="11" font-weight="400" fill="#777777" letter-spacing="-0.415" text-anchor="end">18,940.00</text>
<text x="464.2" y="566.3" font-size="11" font-weight="400" fill="#777777" letter-spacing="-0.424" text-anchor="end">1,328.00</text>
<text x="539.0" y="566.3" font-size="11" font-weight="400" fill="#777777" letter-spacing="-0.338" text-anchor="end">3.64</text>
<text x="613.8" y="566.3" font-size="11" font-weight="400" fill="#777777" letter-spacing="-0.338" text-anchor="end">37.00</text>
<text x="688.6" y="566.3" font-size="11" font-weight="400" fill="#777777" letter-spacing="-0.415" text-anchor="end">26,987.00</text>
<text x="763.5" y="566.3" font-size="11" font-weight="400" fill="#777777" letter-spacing="-0.338" text-anchor="end">0.00</text>
<text x="838.3" y="566.3" font-size="11" font-weight="400" fill="#777777" letter-spacing="-0.338" text-anchor="end">0.00</text>
<text x="913.1" y="566.3" font-size="11" font-weight="400" fill="#777777" letter-spacing="-0.338" text-anchor="end">0.00</text>
<text x="987.9" y="566.3" font-size="11" font-weight="400" fill="#777777" letter-spacing="-0.424" text-anchor="end">4,550.00</text>
<text x="1062.7" y="566.3" font-size="11" font-weight="400" fill="#777777" letter-spacing="-0.338" text-anchor="end">0.00</text>
<text x="1137.5" y="566.3" font-size="11" font-weight="400" fill="#777777" letter-spacing="-0.338" text-anchor="end">0.00</text>
<text x="1212.3" y="566.3" font-size="11" font-weight="400" fill="#777777" letter-spacing="-0.338" text-anchor="end">0.00</text>
<text x="1287.1" y="566.3" font-size="11" font-weight="400" fill="#777777" letter-spacing="-0.338" text-anchor="end">0.38</text>
<text x="20.6" y="593.2" font-size="10.5" font-weight="700" fill="#646464" letter-spacing="-0.182">Saleable / Electric (50)</text>
<text x="389.4" y="592.3" font-size="11" font-weight="400" fill="#777777" letter-spacing="-0.407" text-anchor="end">151,351.00</text>
<text x="464.2" y="592.3" font-size="11" font-weight="400" fill="#777777" letter-spacing="-0.415" text-anchor="end">13,142.00</text>
<text x="539.0" y="592.3" font-size="11" font-weight="400" fill="#777777" letter-spacing="-0.338" text-anchor="end">36.04</text>
<text x="613.8" y="592.3" font-size="11" font-weight="400" fill="#777777" letter-spacing="-0.338" text-anchor="end">363.00</text>
<text x="688.6" y="592.3" font-size="11" font-weight="400" fill="#777777" letter-spacing="-0.407" text-anchor="end">229,521.00</text>
<text x="763.5" y="592.3" font-size="11" font-weight="400" fill="#777777" letter-spacing="-0.338" text-anchor="end">0.00</text>
<text x="838.3" y="592.3" font-size="11" font-weight="400" fill="#777777" letter-spacing="-0.338" text-anchor="end">0.00</text>
<text x="913.1" y="592.3" font-size="11" font-weight="400" fill="#777777" letter-spacing="-0.338" text-anchor="end">0.00</text>
<text x="987.9" y="592.3" font-size="11" font-weight="400" fill="#777777" letter-spacing="-0.415" text-anchor="end">18,975.00</text>
<text x="1062.7" y="592.3" font-size="11" font-weight="400" fill="#777777" letter-spacing="-0.338" text-anchor="end">0.00</text>
<text x="1137.5" y="592.3" font-size="11" font-weight="400" fill="#777777" letter-spacing="-0.338" text-anchor="end">0.00</text>
<text x="1212.3" y="592.3" font-size="11" font-weight="400" fill="#777777" letter-spacing="-0.338" text-anchor="end">0.00</text>
<text x="1287.1" y="592.3" font-size="11" font-weight="400" fill="#777777" letter-spacing="-0.338" text-anchor="end">5.35</text>
<text x="20.6" y="619.2" font-size="10.5" font-weight="700" fill="#646464" letter-spacing="-0.205">Saleable / Furniture (50)</text>
<text x="389.4" y="618.3" font-size="11" font-weight="400" fill="#777777" letter-spacing="-0.407" text-anchor="end">146,257.00</text>
<text x="464.2" y="618.3" font-size="11" font-weight="400" fill="#777777" letter-spacing="-0.415" text-anchor="end">13,316.00</text>
<text x="539.0" y="618.3" font-size="11" font-weight="400" fill="#777777" letter-spacing="-0.338" text-anchor="end">36.48</text>
<text x="613.8" y="618.3" font-size="11" font-weight="400" fill="#777777" letter-spacing="-0.338" text-anchor="end">368.00</text>
<text x="688.6" y="618.3" font-size="11" font-weight="400" fill="#777777" letter-spacing="-0.407" text-anchor="end">214,480.00</text>
<text x="763.5" y="618.3" font-size="11" font-weight="400" fill="#777777" letter-spacing="-0.338" text-anchor="end">20.00</text>
<text x="838.3" y="618.3" font-size="11" font-weight="400" fill="#777777" letter-spacing="-0.338" text-anchor="end">200.00</text>
<text x="913.1" y="618.3" font-size="11" font-weight="400" fill="#777777" letter-spacing="-0.338" text-anchor="end">21.00</text>
<text x="987.9" y="618.3" font-size="11" font-weight="400" fill="#777777" letter-spacing="-0.407" text-anchor="end">127,600.00</text>
<text x="1062.7" y="618.3" font-size="11" font-weight="400" fill="#777777" letter-spacing="-0.415" text-anchor="end">75,260.00</text>
<text x="1137.5" y="618.3" font-size="11" font-weight="400" fill="#777777" letter-spacing="-0.338" text-anchor="end">67.74</text>
<text x="1212.3" y="618.3" font-size="11" font-weight="400" fill="#777777" letter-spacing="-0.338" text-anchor="end">79.04</text>
<text x="1287.1" y="618.3" font-size="11" font-weight="400" fill="#777777" letter-spacing="-0.338" text-anchor="end">6.72</text>
<text x="20.6" y="645.2" font-size="10.5" font-weight="700" fill="#646464" letter-spacing="-0.215">Saleable / Mobile Accessories (40)</text>
<text x="389.4" y="644.3" font-size="11" font-weight="400" fill="#777777" letter-spacing="-0.415" text-anchor="end">19,641.00</text>
<text x="464.2" y="644.3" font-size="11" font-weight="400" fill="#777777" letter-spacing="-0.424" text-anchor="end">6,319.00</text>
<text x="539.0" y="644.3" font-size="11" font-weight="400" fill="#777777" letter-spacing="-0.338" text-anchor="end">17.31</text>
<text x="613.8" y="644.3" font-size="11" font-weight="400" fill="#777777" letter-spacing="-0.338" text-anchor="end">179.00</text>
<text x="688.6" y="644.3" font-size="11" font-weight="400" fill="#777777" letter-spacing="-0.415" text-anchor="end">45,998.00</text>
<text x="763.5" y="644.3" font-size="11" font-weight="400" fill="#777777" letter-spacing="-0.338" text-anchor="end">100.00</text>
<text x="838.3" y="644.3" font-size="11" font-weight="400" fill="#777777" letter-spacing="-0.424" text-anchor="end">1,000.00</text>
<text x="913.1" y="644.3" font-size="11" font-weight="400" fill="#777777" letter-spacing="-0.338" text-anchor="end">47.00</text>
<text x="987.9" y="644.3" font-size="11" font-weight="400" fill="#777777" letter-spacing="-0.415" text-anchor="end">19,015.00</text>
<text x="1062.7" y="644.3" font-size="11" font-weight="400" fill="#777777" letter-spacing="-0.324" text-anchor="end">12,114.20</text>
<text x="1137.5" y="644.3" font-size="11" font-weight="400" fill="#777777" letter-spacing="-0.338" text-anchor="end">300.01</text>
<text x="1212.3" y="644.3" font-size="11" font-weight="400" fill="#777777" letter-spacing="-0.338" text-anchor="end">300.00</text>
<text x="1287.1" y="644.3" font-size="11" font-weight="400" fill="#777777" letter-spacing="-0.338" text-anchor="end">123.52</text>
<text x="20.6" y="671.2" font-size="10.5" font-weight="700" fill="#646464" letter-spacing="-0.195">Saleable / Plumbing (50)</text>
<text x="389.4" y="670.3" font-size="11" font-weight="400" fill="#777777" letter-spacing="-0.407" text-anchor="end">147,594.00</text>
<text x="464.2" y="670.3" font-size="11" font-weight="400" fill="#777777" letter-spacing="-0.415" text-anchor="end">13,702.00</text>
<text x="539.0" y="670.3" font-size="11" font-weight="400" fill="#777777" letter-spacing="-0.338" text-anchor="end">37.55</text>
<text x="613.8" y="670.3" font-size="11" font-weight="400" fill="#777777" letter-spacing="-0.338" text-anchor="end">380.00</text>
<text x="688.6" y="670.3" font-size="11" font-weight="400" fill="#777777" letter-spacing="-0.325" text-anchor="end">211,894.00</text>
<text x="763.5" y="670.3" font-size="11" font-weight="400" fill="#777777" letter-spacing="-0.338" text-anchor="end">0.00</text>
<text x="838.3" y="670.3" font-size="11" font-weight="400" fill="#777777" letter-spacing="-0.338" text-anchor="end">0.00</text>
<text x="913.1" y="670.3" font-size="11" font-weight="400" fill="#777777" letter-spacing="-0.338" text-anchor="end">0.00</text>
<text x="987.9" y="670.3" font-size="11" font-weight="400" fill="#777777" letter-spacing="-0.324" text-anchor="end">11,475.00</text>
<text x="1062.7" y="670.3" font-size="11" font-weight="400" fill="#777777" letter-spacing="-0.338" text-anchor="end">0.00</text>
<text x="1137.5" y="670.3" font-size="11" font-weight="400" fill="#777777" letter-spacing="-0.338" text-anchor="end">0.00</text>
<text x="1212.3" y="670.3" font-size="11" font-weight="400" fill="#777777" letter-spacing="-0.338" text-anchor="end">0.00</text>
<text x="1287.1" y="670.3" font-size="11" font-weight="400" fill="#777777" letter-spacing="-0.338" text-anchor="end">6.23</text>
</svg>
</body></html>
